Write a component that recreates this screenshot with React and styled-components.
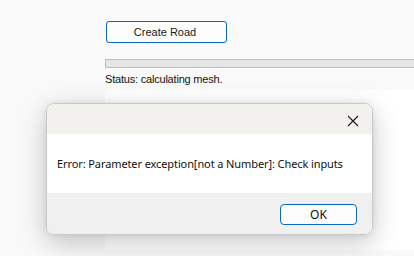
import React from "react";
import styled, { createGlobalStyle } from "styled-components";

const Global = createGlobalStyle`
  html, body {
    margin: 0;
    padding: 0;
    background: #f9f9f9;
  }
  body {
    width: 414px;
    height: 256px;
    overflow: hidden;
    font-family: "Liberation Sans", Arial, sans-serif;
  }
`;

const Form = styled.div`
  position: relative;
  width: 414px;
  height: 256px;
  background: #f9f9f9;
  padding: 21px 0 0 105px;
  box-sizing: border-box;
  overflow: hidden;
`;

const FormButton = styled.button`
  display: block;
  width: 121px;
  height: 22px;
  margin-left: 1px;
  padding: 0 3px 0 0;
  border: 1px solid #0a68c4;
  border-radius: 3px;
  background: #fdfdfd;
  color: #1a1a1a;
  font-family: "Liberation Sans", Arial, sans-serif;
  font-size: 11px;
`;

const Progress = styled.div`
  margin-top: 16px;
  height: 9px;
  background: #e6e6e6;
  border: 1px solid #bcbcbc;
  border-right: none;
  box-sizing: border-box;
`;

const Status = styled.div`
  margin-top: 3px;
  font-size: 11px;
  letter-spacing: -0.2px;
  line-height: 16px;
  color: #111;
`;

const Output = styled.div`
  margin-top: 3px;
  height: 160px;
  background: #ffffff;
`;

const Dialog = styled.div`
  position: absolute;
  left: 46px;
  top: 103px;
  width: 327px;
  height: 132px;
  border-radius: 8px;
  overflow: hidden;
  border: 1px solid #c8c8c8;
  box-sizing: border-box;
  box-shadow: 0 8px 28px rgba(0, 0, 0, 0.22), 0 0 6px rgba(0, 0, 0, 0.08);
  display: flex;
  flex-direction: column;
  font-family: "Noto Sans", "Open Sans", sans-serif;
`;

const TitleBar = styled.div`
  height: 30px;
  background: #f3f1ee;
  display: flex;
  justify-content: flex-end;
  align-items: center;
  padding-right: 13px;
`;

const Close = styled.svg`
  width: 12px;
  height: 12px;
  margin-top: 3px;
`;

const Body = styled.div`
  height: 59px;
  background: #ffffff;
  display: flex;
  align-items: center;
  padding-left: 10px;
  font-size: 11px;
  letter-spacing: -0.1px;
  white-space: nowrap;
  color: #111;
`;

const Footer = styled.div`
  flex: 1;
  background: #f0f0f0;
  display: flex;
  justify-content: flex-end;
  align-items: flex-start;
  padding: 11px 15px 0 0;
`;

const OkButton = styled.button`
  width: 77px;
  height: 21px;
  padding: 0;
  border: 1px solid #0a68c4;
  border-radius: 4px;
  background: #fdfdfd;
  color: #111;
  font-family: "Noto Sans", "Open Sans", sans-serif;
  font-size: 12px;
`;

export default function App() {
  return (
    <>
      <Global />
      <Form>
        <FormButton>Create Road</FormButton>
        <Progress />
        <Status>Status: calculating mesh.</Status>
        <Output />
        <Dialog>
          <TitleBar>
            <Close viewBox="0 0 12 12">
              <path d="M1 1 L11 11 M11 1 L1 11" stroke="#1a1a1a" strokeWidth="1.1" />
            </Close>
          </TitleBar>
          <Body>Error: Parameter exception[not a Number]: Check inputs</Body>
          <Footer>
            <OkButton>OK</OkButton>
          </Footer>
        </Dialog>
      </Form>
    </>
  );
}
